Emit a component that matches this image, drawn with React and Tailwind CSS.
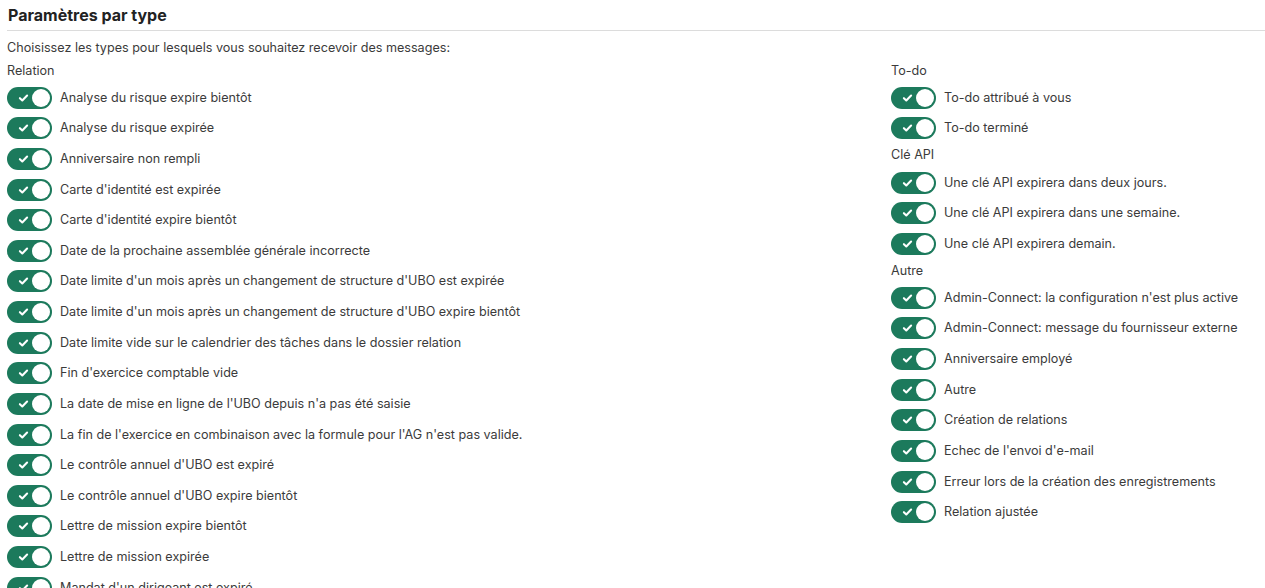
const groupsLeft = [
  {
    title: 'Relation',
    items: [
      'Analyse du risque expire bientôt',
      'Analyse du risque expirée',
      'Anniversaire non rempli',
      "Carte d'identité est expirée",
      "Carte d'identité expire bientôt",
      'Date de la prochaine assemblée générale incorrecte',
      "Date limite d'un mois après un changement de structure d'UBO est expirée",
      "Date limite d'un mois après un changement de structure d'UBO expire bientôt",
      'Date limite vide sur le calendrier des tâches dans le dossier relation',
      "Fin d'exercice comptable vide",
      "La date de mise en ligne de l'UBO depuis n'a pas été saisie",
      "La fin de l'exercice en combinaison avec la formule pour l'AG n'est pas valide.",
      "Le contrôle annuel d'UBO est expiré",
      "Le contrôle annuel d'UBO expire bientôt",
      'Lettre de mission expire bientôt',
      'Lettre de mission expirée',
      "Mandat d'un dirigeant est expiré",
    ],
  },
];

const groupsRight = [
  { title: 'To-do', items: ['To-do attribué à vous', 'To-do terminé'] },
  {
    title: 'Clé API',
    items: [
      'Une clé API expirera dans deux jours.',
      'Une clé API expirera dans une semaine.',
      'Une clé API expirera demain.',
    ],
  },
  {
    title: 'Autre',
    items: [
      "Admin-Connect: la configuration n'est plus active",
      'Admin-Connect: message du fournisseur externe',
      'Anniversaire employé',
      'Autre',
      'Création de relations',
      "Echec de l'envoi d'e-mail",
      'Erreur lors de la création des enregistrements',
      'Relation ajustée',
    ],
  },
];

function Toggle() {
  return (
    <span className="relative flex h-[22px] w-[45px] shrink-0 items-center rounded-full bg-[#1c7a5c]">
      <svg
        viewBox="0 0 12 10"
        className="absolute left-[11px] top-[7px] h-[8px] w-[11px]"
        fill="none"
        stroke="white"
        strokeWidth="2.6"
        strokeLinecap="round"
        strokeLinejoin="round"
      >
        <path d="M1.5 5.2 4.5 8 10.5 2" />
      </svg>
      <span className="absolute right-[2px] top-[2px] h-[18px] w-[18px] rounded-full bg-white" />
    </span>
  );
}

function Group({ title, items }) {
  return (
    <div>
      <div className="flex h-[23.5px] items-center">{title}</div>
      {items.map((label) => (
        <label key={label} className="flex h-[30.62px] items-center gap-2">
          <Toggle />
          <span>{label}</span>
        </label>
      ))}
    </div>
  );
}

export default function App() {
  return (
    <div
      className="h-[588px] overflow-hidden bg-white pl-[7px] text-[12.6px] leading-5 text-[#3b3b3b]"
      style={{ fontFamily: 'Inter, "Noto Sans", sans-serif' }}
    >
      <h2 className="flex h-[31px] items-center border-b border-[#dcdcdc] pl-px text-base font-bold text-[#222]">
        Paramètres par type
      </h2>
      <p className="mt-[6px] h-[22px] leading-[22px]">
        Choisissez les types pour lesquels vous souhaitez recevoir des messages:
      </p>
      <div className="grid grid-cols-[884px_1fr]">
        <div>
          {groupsLeft.map((g) => (
            <Group key={g.title} {...g} />
          ))}
        </div>
        <div>
          {groupsRight.map((g) => (
            <Group key={g.title} {...g} />
          ))}
        </div>
      </div>
    </div>
  );
}
